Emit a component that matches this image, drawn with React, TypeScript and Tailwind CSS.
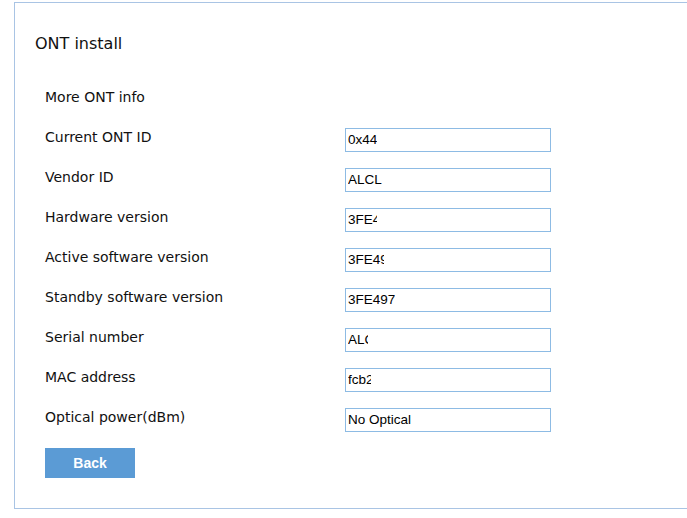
const rows = [
  { label: 'Current ONT ID', value: '0x44', clip: 31 },
  { label: 'Vendor ID', value: 'ALCL', clip: 40 },
  { label: 'Hardware version', value: '3FE49', clip: 29 },
  { label: 'Active software version', value: '3FE497', clip: 36 },
  { label: 'Standby software version', value: '3FE497', clip: 60 },
  { label: 'Serial number', value: 'ALCL', clip: 20 },
  { label: 'MAC address', value: 'fcb2', clip: 23 },
  { label: 'Optical power(dBm)', value: 'No Optical', clip: 120 },
]

function ValueBox({ value, clip }: { value: string; clip: number }) {
  return (
    <div className="mt-[1px] h-[24px] w-[206px] border border-[#8dbbe4] bg-white pl-[2px] flex items-center">
      <span
        className="block overflow-hidden whitespace-nowrap text-[13.5px] leading-[22px] text-black"
        style={{ maxWidth: clip, fontFamily: '"Liberation Sans", Arial, sans-serif' }}
      >
        {value}
      </span>
    </div>
  )
}

export default function App() {
  return (
    <div className="h-[518px] w-[687px] overflow-hidden bg-white pl-[14px] pt-[2px]">
      <div
        className="flex h-[507px] w-[700px] flex-col border-l border-t border-b border-[#a9c4e4] bg-white text-[#111]"
        style={{ fontFamily: '"DejaVu Sans", Verdana, sans-serif' }}
      >
        <h1 className="ml-[20px] mt-[29px] text-[16px] leading-[24px] font-normal">ONT install</h1>

        <div className="ml-[30px] mt-[31px] text-[14px] leading-[20px]">More ONT info</div>

        <div className="mt-[20px] flex flex-col">
          {rows.map((r) => (
            <div key={r.label} className="flex h-[40px] items-start">
              <div className="w-[330px] pl-[30px] text-[14px] leading-[20px]">{r.label}</div>
              <ValueBox value={r.value} clip={r.clip} />
            </div>
          ))}
        </div>

        <button
          className="ml-[30px] mt-[1px] h-[30px] w-[90px] bg-[#5b9bd5] text-[14px] font-bold text-white"
          style={{ fontFamily: '"Liberation Sans", Arial, sans-serif' }}
        >
          Back
        </button>
      </div>
    </div>
  )
}
